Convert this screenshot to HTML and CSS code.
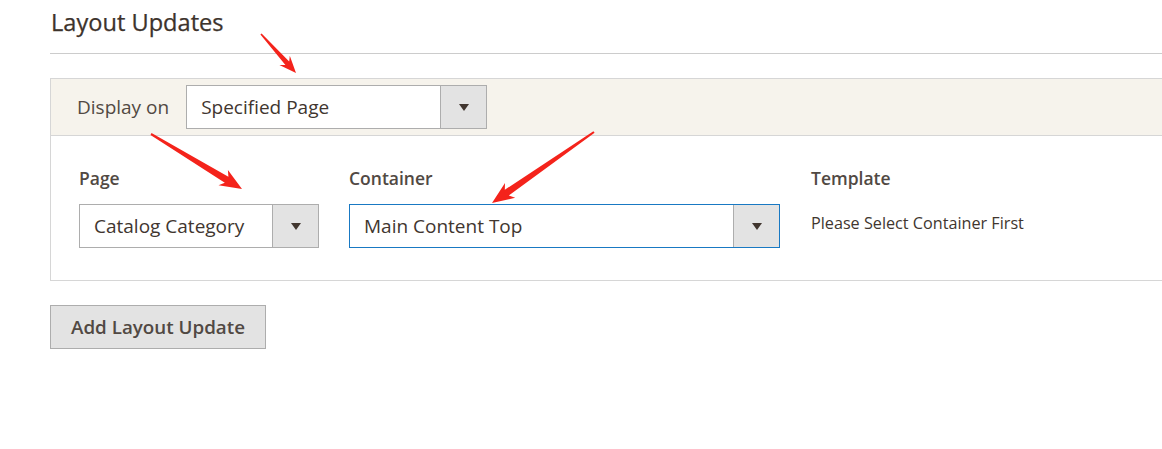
FILE: index.html
```html
<!DOCTYPE html>
<html>
<head>
<meta charset="utf-8">
<link rel="stylesheet" href="styles.css">
</head>
<body>
<div class="page">
  <h2 class="title">Layout Updates</h2>
  <div class="panel">
    <div class="panel-head">
      <span class="head-label">Display on</span>
      <div class="select select-display">
        <span class="select-value">Specified Page</span>
        <span class="select-btn"><span class="tri"></span></span>
      </div>
    </div>
    <div class="panel-body">
      <div class="field field-page">
        <div class="label">Page</div>
        <div class="select">
          <span class="select-value">Catalog Category</span>
          <span class="select-btn"><span class="tri"></span></span>
        </div>
      </div>
      <div class="field field-container">
        <div class="label">Container</div>
        <div class="select select-focus">
          <span class="select-value">Main Content Top</span>
          <span class="select-btn"><span class="tri"></span></span>
        </div>
      </div>
      <div class="field field-template">
        <div class="label">Template</div>
        <div class="note">Please Select Container First</div>
      </div>
    </div>
  </div>
  <button class="add-btn">Add Layout Update</button>
</div>
<svg class="arrows" width="1162" height="449" viewBox="0 0 1162 449">
  <polygon points="260.4,34.5 285.4,65.0 279.4,65.1 296,73 289.8,55.7 289.2,61.6 261.6,33.5"/>
  <polygon points="150.5,134.9 224.8,182.7 218.5,185.3 242,189 227.9,169.9 228.4,176.7 151.5,133.1"/>
  <polygon points="593.4,131.2 504.8,189.8 505.0,183.0 492,203 515.2,197.8 508.8,195.6 594.6,132.8"/>
</svg>
</body>
</html>
```

FILE: styles.css
```css
html, body {
  margin: 0;
  padding: 0;
  background: #ffffff;
  overflow: hidden;
}
body {
  font-family: "Open Sans", "Noto Sans", sans-serif;
  color: #41362f;
  width: 1162px;
  height: 449px;
  position: relative;
}
.page {
  padding-left: 50px;
}
.title {
  margin: 0;
  padding: 6px 0 15px 1px;
  font-size: 23.6px;
  line-height: 32px;
  font-weight: 400;
  color: #3d332c;
  border-bottom: 1px solid #cccccc;
  -webkit-text-stroke: 0.25px #3d332c;
}
.panel {
  margin-top: 24px;
  border: 1px solid #d6d6d6;
  border-right: none;
}
.panel-head {
  height: 57px;
  background: #f6f3ec;
  border-bottom: 1px solid #d6d6d6;
  display: flex;
  align-items: center;
  padding-left: 26px;
  box-sizing: border-box;
  gap: 17px;
}
.head-label {
  font-size: 19px;
  color: #514943;
}
.select {
  height: 44px;
  box-sizing: border-box;
  border: 1px solid #adadad;
  background: #ffffff;
  display: flex;
  align-items: stretch;
}
.select-display {
  width: 301px;
}
.select-value {
  flex: 1;
  display: flex;
  align-items: center;
  padding-left: 14px;
  font-size: 19px;
  color: #41362f;
  white-space: nowrap;
}
.select-btn {
  width: 45px;
  background: #e3e3e3;
  border-left: 1px solid #adadad;
  display: flex;
  align-items: center;
  justify-content: center;
}
.tri {
  width: 0;
  height: 0;
  border-left: 5.5px solid transparent;
  border-right: 5.5px solid transparent;
  border-top: 7px solid #41362f;
}
.select-focus {
  border-color: #1979c3;
}
.select-focus .select-btn {
  border-left-color: #adadad;
}
.panel-body {
  display: flex;
  padding: 30px 0 32px 28px;
  gap: 30px;
}
.field-page {
  width: 240px;
}
.field-container {
  width: 431px;
}
.field-template {
  margin-left: 1px;
}
.label {
  font-size: 17.5px;
  font-weight: 600;
  color: #514943;
  line-height: 24px;
  margin-bottom: 14px;
}
.note {
  font-size: 16.2px;
  color: #41362f;
  line-height: 22px;
  margin-top: 22px;
}
.add-btn {
  margin-top: 24px;
  height: 44px;
  padding: 0 20px;
  border: 1px solid #adadad;
  background: #e3e3e3;
  font-family: "Open Sans", "Noto Sans", sans-serif;
  font-size: 18.8px;
  font-weight: 600;
  color: #514943;
  display: block;
}
.arrows {
  position: absolute;
  left: 0;
  top: 0;
  pointer-events: none;
}
.arrows polygon {
  fill: #f4231b;
}
```
